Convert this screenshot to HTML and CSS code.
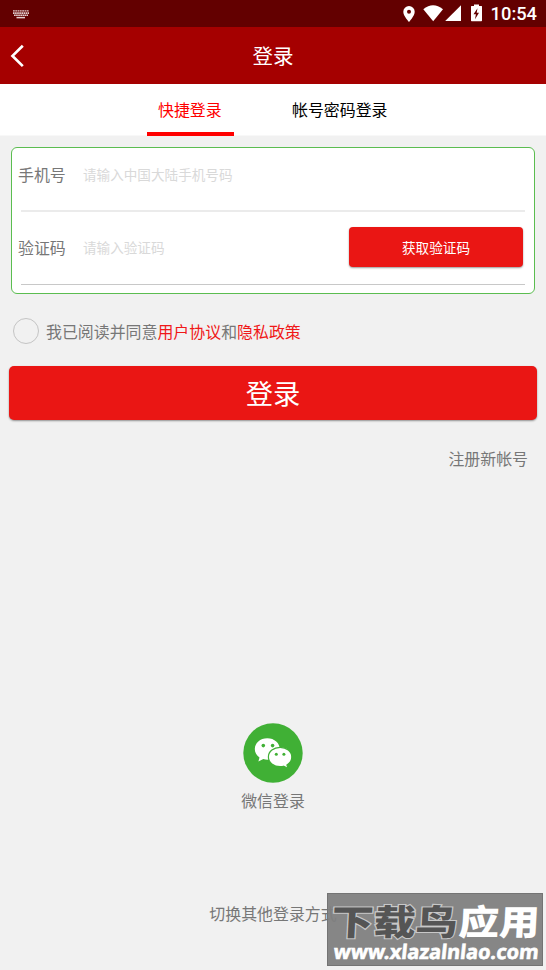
FILE: index.html
```html
<!DOCTYPE html>
<html lang="zh-CN">
<head>
<meta charset="utf-8">
<title>登录</title>
<link rel="stylesheet" href="styles.css">
</head>
<body>
<div class="screen">
  <div class="status">
    <svg class="keyboard" width="16" height="9" viewBox="0 0 16 9" fill="none" stroke="#e4d0d0">
      <path d="M0 .8H16" stroke-width="1.3" stroke-dasharray="1.8 .5"/>
      <path d="M0 3.100H16" stroke-width="1.700" stroke-dasharray="1.600 .5"/>
      <path d="M1 5.300H15" stroke-width="1.500" stroke-dasharray="1.700 .4"/>
      <path d="M3.500 7.600H12" stroke-width="1.500"/>
    </svg>
    <div class="indicators">
      <svg width="138" height="20" viewBox="0 0 138 20">
        <g fill="#fff">
          <path fill-rule="evenodd" d="M9 2a5.700 5.700 0 0 0-5.700 5.700C3.300 12 9 17.900 9 17.900s5.700-5.900 5.700-10.200A5.700 5.700 0 0 0 9 2zm0 3.700a2 2 0 1 1 0 4 2 2 0 0 1 0-4z"/>
          <path d="M23.300 5.300Q33 -2.600 43 5.300L33.200 17.200z"/>
          <path d="M61 1.200V17H45.200z"/>
          <path fill-rule="evenodd" d="M74 .5h5V2h2.500q.5 0 .5.500V16.500q0 .7-.7.700h-9.600q-.7 0-.7-.700V2.500q0-.5.500-.500H74zM77.500 4.200l-4 6h2.400l-.9 5 4-6.500h-2.300z"/>
        </g>
      </svg>
      <span class="clock">10:54</span>
    </div>
  </div>
  <header class="bar">
    <svg class="back" width="16" height="24" viewBox="0 0 16 24"><path d="M12.800 1.700L2.500 11.900 12.800 22.100" fill="none" stroke="#fff" stroke-width="2.700"/></svg>
    <h1>登录</h1>
  </header>
  <nav class="tabs">
    <span class="tab active">快捷登录</span>
    <span class="tab">帐号密码登录</span>
  </nav>
  <main class="content">
    <section class="card">
      <div class="field first">
        <span class="label">手机号</span><span class="hint">请输入中国大陆手机号码</span>
      </div>
      <div class="field second">
        <span class="label">验证码</span><span class="hint">请输入验证码</span>
        <button class="code">获取验证码</button>
      </div>
    </section>
    <div class="agree"><span class="check"></span><span>我已阅读并同意<b>用户协议</b>和<b>隐私政策</b></span></div>
    <button class="login">登录</button>
    <div class="register">注册新帐号</div>
    <div class="wechat">
      <svg width="60" height="60" viewBox="0 0 60 60">
        <circle cx="30" cy="30" r="29.700" fill="#40b035"/>
        <path d="M24.300 15.200c-7.200 0-12.500 4.900-12.500 10.900 0 3.500 1.800 6.400 4.700 8.400l-1.100 3.900 4.900-2.300c1.300.4 2.600.6 4 .6 7 0 12.500-4.700 12.500-10.600S31.500 15.200 24.300 15.200z" fill="#fff"/>
        <path d="M37.100 24.300c-6.400 0-11.700 4.200-11.700 9.700s5.300 9.700 11.700 9.700c1.200 0 2.400-.1 3.500-.5l4.500 2.400-1.200-3.700c2.800-1.700 4.900-4.400 4.900-7.900 0-5.500-5.300-9.700-11.700-9.700z" fill="#fff" stroke="#40b035" stroke-width="1.200"/>
        <g fill="#40b035"><circle cx="20.300" cy="22.600" r="1.800"/><circle cx="29.600" cy="22.600" r="1.800"/><circle cx="33.300" cy="31.300" r="1.500"/><circle cx="40.900" cy="31.300" r="1.500"/></g>
      </svg>
      <span>微信登录</span>
    </div>
    <div class="switch">切换其他登录方式</div>
  </main>
  <div class="watermark">
    <svg width="216" height="73" viewBox="0 0 216 73">
      <g transform="translate(4 42) skewX(-3) scale(1 .9)" class="brand">
        <text class="dark" x="0" y="0" textLength="126" lengthAdjust="spacingAndGlyphs">下载鸟</text>
        <text class="light" x="127" y="0" textLength="81" lengthAdjust="spacingAndGlyphs">应用</text>
      </g>
      <g transform="translate(6 66) skewX(-6)">
        <text class="url" x="0" y="0" textLength="205" lengthAdjust="spacingAndGlyphs">www.xlazalnlao.com</text>
      </g>
    </svg>
  </div>
</div>
</body>
</html>
```
FILE: styles.css
```css
* { box-sizing: border-box; }
body {
  margin: 0;
  background: #f1f1f1;
  font-family: "Noto Sans CJK SC", sans-serif;
  font-size: 15.93px;
  color: #777;
}
.screen { position: relative; height: 970px; overflow: hidden; display: flex; flex-direction: column; }
.status { height: 27px; flex: none; background: #630000; display: flex; justify-content: space-between; padding: 0 9px 0 13px; }
.keyboard { margin-top: 10px; }
.indicators { display: flex; height: 27px; }
.indicators svg { margin: 4px -47px 0 0; }
.clock { font: 500 18.3px/28px Roboto, sans-serif; color: #fff; }
.bar { height: 57px; flex: none; background: #a50000; display: grid; grid-template-columns: 40px 1fr 40px; align-items: center; }
.back { margin-left: 10px; }
.bar h1 { margin: 0; font-size: 20.5px; font-weight: 400; line-height: 30px; padding-bottom: 2px; color: #fff; text-align: center; }
.tabs { height: 52px; flex: none; background: #fff; display: flex; gap: 47px; padding-left: 147px; color: #000; border-bottom: 1px solid #f8f8f8; }
.tab { height: 52px; line-height: 52px; padding: 0 11px; white-space: nowrap; }
.active { width: 87px; color: #f00; border-bottom: 4px solid #f00; }
.content { flex: 1; display: flex; flex-direction: column; padding: 11px 9px 0; }
.card { height: 147px; margin: 0 2px; border: 1px solid #5bbd50; border-radius: 6px; background: #fff; padding: 0 9px; }
.field { display: flex; align-items: center; }
.first { height: 64px; border-bottom: 2px solid #ebebeb; padding-bottom: 10px; }
.second { height: 73px; border-bottom: 1px solid #c8c8c8; padding-bottom: 2px; }
.label { width: 65px; margin-left: -3px; }
.hint { font-size: 13.6px; color: #d9d9d9; }
button { border: 0; padding: 0; font-family: inherit; color: #fff; background: #ea1614; border-radius: 4px; box-shadow: 0 1px 2px #0006; }
.code { width: 174px; height: 40px; margin: 0 2px 0 auto; font-size: 13.6px; }
.agree { display: flex; align-items: center; height: 28px; margin: 23px 0 0 4px; }
.check { width: 26px; height: 26px; margin: 0 7px 0 0; border: 1px solid #c4c4c4; border-radius: 50%; }
.agree b { font-weight: 400; color: #f01818; }
.login { width: 528px; height: 54px; flex: none; margin-top: 21px; padding-bottom: 2px; font-size: 27.3px; border-radius: 5px; }
.register { height: 24px; line-height: 24px; margin: 27px 9px 0 0; text-align: right; }
.wechat { display: flex; flex-direction: column; align-items: center; margin-top: 252px; }
.wechat span { line-height: 24px; margin-top: 6px; }
.switch { line-height: 24px; margin-top: 89px; text-align: center; }
.watermark { position: absolute; left: 327px; top: 893px; width: 216px; height: 73px; background: #808080f2; border: 1px solid #747474; }
.watermark svg { display: block; margin: -1px; overflow: visible; }
.brand { font: 900 39px/1 "Noto Sans CJK SC", sans-serif; }
.dark { fill: #555; stroke: #c8c8c8; stroke-width: 2.5px; paint-order: stroke; }
.light { fill: #fff; }
.url { font: 700 20px/1 "Noto Sans", sans-serif; fill: #fff; stroke: #fff; stroke-width: .6px; }
```
